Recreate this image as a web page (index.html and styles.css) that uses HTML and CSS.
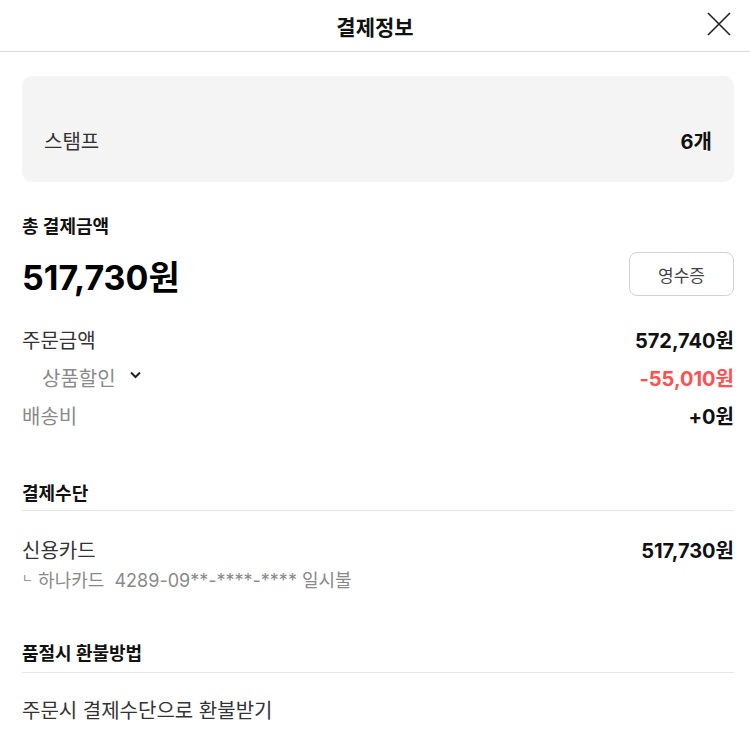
FILE: index.html
```html
<!DOCTYPE html>
<html lang="ko">
<head>
  <meta charset="UTF-8" />
  <title>결제정보</title>
  <meta name="viewport" content="width=device-width, initial-scale=1.0" />
  <link rel="stylesheet" href="styles.css">
</head>
<body>
  <header class="top__bar">
    <h1 class="top__title">결제정보</h1>
    <button class="close__btn" aria-label="닫기">
      <svg width="24" height="24" viewBox="0 0 24 24" fill="none" stroke="#222" stroke-width="1.6">
        <path d="M1 1L23 23M23 1L1 23" />
      </svg>
    </button>
  </header>

  <main class="content">
    <div class="stamp__box">
      <span>스탬프</span>
      <strong>6개</strong>
    </div>

    <section class="total">
      <h2 class="sec__title">총 결제금액</h2>
      <div class="total__row">
        <span class="total__price">517,730원</span>
        <button class="receipt__btn">영수증</button>
      </div>

      <div class="line">
        <span class="line__label">주문금액</span>
        <strong>572,740원</strong>
      </div>
      <div class="line">
        <span class="line__label sub">상품할인
          <svg class="chev" width="11" height="8" viewBox="0 0 11 8" fill="none" stroke="#222" stroke-width="2">
            <path d="M1 1.5L5.5 6L10 1.5" />
          </svg>
        </span>
        <strong class="minus">-55,010원</strong>
      </div>
      <div class="line">
        <span class="line__label gray">배송비</span>
        <strong>+0원</strong>
      </div>
    </section>

    <section class="block">
      <h2 class="sec__title lined">결제수단</h2>
      <div class="pay">
        <div>
          <div class="pay__name">신용카드</div>
          <div class="pay__card"><span class="corner">ㄴ</span> 하나카드&nbsp; 4289-09**-****-**** 일시불</div>
        </div>
        <strong class="pay__amount">517,730원</strong>
      </div>
    </section>

    <section class="block refund">
      <h2 class="sec__title lined">품절시 환불방법</h2>
      <p class="refund__text">주문시 결제수단으로 환불받기</p>
    </section>
  </main>
</body>
</html>
```

FILE: styles.css
```css
body {
  font-family: "Inter", "Noto Sans CJK KR", sans-serif;
  color: #222;
  background: #fff;
  margin: 0;
}
.top__bar {
  height: 52px;
  border-bottom: 1px solid #dcdde0;
  display: flex;
  align-items: center;
  justify-content: center;
  position: relative;
  box-sizing: border-box;
}
.top__title {
  margin: 0;
  font-size: 21px;
  font-weight: 700;
  color: #111;
}
.close__btn {
  position: absolute;
  right: 19px;
  top: 12px;
  width: 24px;
  height: 24px;
  padding: 0;
  border: 0;
  background: none;
}
.close__btn svg {
  display: block;
}
.content {
  padding: 24px 16px 0 22px;
}
.stamp__box {
  background: #f4f4f4;
  border-radius: 10px;
  padding: 54px 22px 28px 22px;
  display: flex;
  justify-content: space-between;
  font-size: 20px;
  line-height: 24px;
  color: #333;
}
.stamp__box strong {
  color: #111;
}
.sec__title {
  margin: 0;
  font-size: 18px;
  font-weight: 700;
  line-height: 24px;
  color: #111;
}
.total {
  margin-top: 33px;
}
.total__row {
  margin-top: 9px;
  display: flex;
  justify-content: space-between;
  align-items: center;
}
.total__price {
  font-size: 34px;
  font-weight: 700;
  line-height: 44px;
  color: #000;
  padding-top: 8px;
}
.receipt__btn {
  width: 105px;
  height: 44px;
  border: 1px solid #d2d2d2;
  border-radius: 8px;
  background: #fff;
  font-family: inherit;
  font-size: 17px;
  color: #444;
}
.total__row + .line {
  margin-top: 20px;
}
.line {
  display: flex;
  justify-content: space-between;
  align-items: center;
  height: 38px;
  font-size: 20px;
}
.line strong {
  color: #111;
}
.line__label {
  color: #333;
}
.line__label.sub {
  color: #8a8a8a;
  padding-left: 20px;
  display: flex;
  align-items: center;
  gap: 14px;
}
.line__label.gray {
  color: #8a8a8a;
}
.chev {
  margin-top: -4px;
}
.minus {
  color: #ff4f4f !important;
}
.block {
  margin-top: 48px;
}
.sec__title.lined {
  padding-bottom: 4px;
  border-bottom: 1px solid #e6e6e6;
}
.pay {
  margin-top: 25px;
  display: flex;
  justify-content: space-between;
  align-items: flex-start;
  font-size: 20px;
  line-height: 30px;
}
.pay__name {
  color: #333;
}
.pay__card {
  margin-top: -2px;
  font-size: 18px;
  color: #8a8a8a;
}
.corner {
  font-size: 12px;
  vertical-align: 4px;
}
.pay__amount {
  color: #111;
}
.block.refund {
  margin-top: 46px;
}
.refund .sec__title.lined {
  padding-bottom: 6px;
}
.refund__text {
  margin: 26px 0 0;
  font-size: 20px;
  line-height: 24px;
  color: #333;
}
```
